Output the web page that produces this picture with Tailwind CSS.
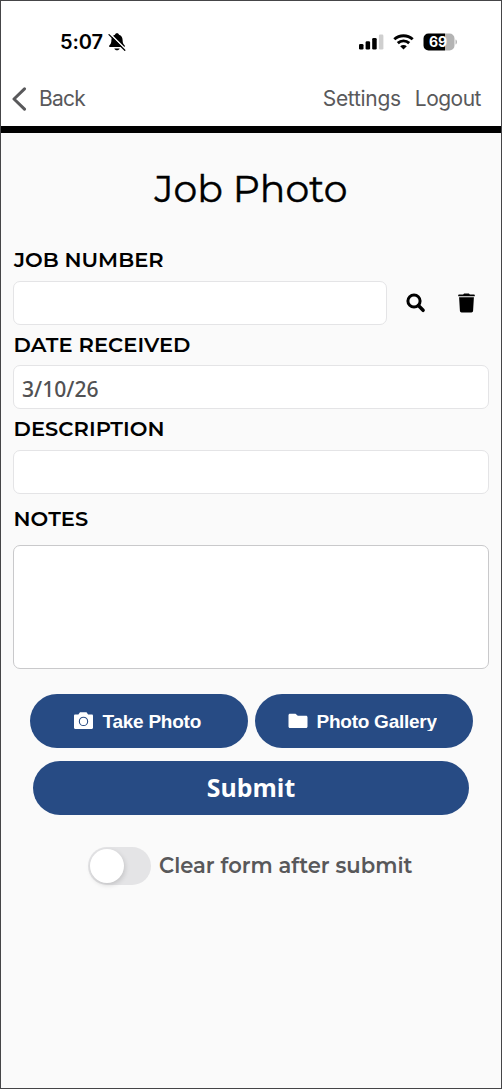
<!DOCTYPE html>
<html lang="en">
<head>
<meta charset="utf-8">
<title>Job Photo</title>
<script src="https://cdn.jsdelivr.net/npm/@tailwindcss/browser@4"></script>
</head>
<body class="bg-[#fafafa]">
<div class="flex h-[1089px] w-[502px] flex-col overflow-hidden border border-[#454547] bg-[#fafafa] font-[Montserrat,Inter,sans-serif] text-black">
  <header class="flex h-[132px] shrink-0 flex-col border-b-[7px] border-black bg-white font-[Inter,sans-serif]">
    <div class="flex h-[72px] items-start justify-between pt-[19px] pl-[59px] pr-[43px]">
      <div class="flex h-[44px] items-center gap-[5px]">
        <span class="text-[20px] leading-6 font-semibold tracking-[-0.1px]">5:07</span>
        <svg class="h-[20px] w-[18px]" viewBox="0 0 18 20"><path d="M9 1.200c1.200 0 1.900.7 2 1.600 2.500.8 3.500 2.700 3.600 5.200.1 3 .5 3.800 1.900 5.200.7.7.3 1.900-.6 1.900H2.100c-.9 0-1.300-1.200-.6-1.900C2.900 11.800 3.300 11 3.400 8 3.500 5.500 4.500 3.600 7 2.800c.1-.9.8-1.600 2-1.600zM6.300 16.400h5.400c-.4 1.200-1.400 1.800-2.700 1.800s-2.300-.6-2.700-1.800z"/><path d="M2 1.700 17.500 17.200" stroke="#fff" stroke-width="1.600"/><path d="M1 2.600 16.800 18.300" stroke="#000" stroke-width="1.300" stroke-linecap="round"/></svg>
      </div>
      <div class="flex h-[44px] items-center">
        <svg class="h-[16px] w-[25px]" viewBox="0 0 25 16"><rect x="0" y="10" width="4.500" height="5.500" rx="1.300"/><rect x="6.600" y="7.300" width="4.500" height="8.200" rx="1.300"/><rect x="13.200" y="4" width="4.500" height="11.500" rx="1.300"/><rect x="19.900" y="0.500" width="4.500" height="15" rx="1.300" fill="#cfcfcf"/></svg>
        <svg class="ml-[9px] h-[16px] w-[21px]" viewBox="0 0 21 16"><path d="M1.300 5.300c5.200-4.800 13.200-4.800 18.400 0M4.800 9.100c3.200-3 8.200-3 11.400 0" fill="none" stroke="#000" stroke-width="2.900"/><path d="M7.200 12.200c1.900-1.700 4.700-1.700 6.600 0l-3.300 3.300z"/></svg>
        <svg class="ml-[9px] h-[18px] w-[35px]" viewBox="0 0 35 18"><path d="M5.500.5H22v17H5.500A5 5 0 0 1 .5 12.500v-7a5 5 0 0 1 5-5z"/><path d="M22 .5h4.500a5 5 0 0 1 5 5v7a5 5 0 0 1-5 5H22zM32.500 6.500c2 .6 2 4.400 0 5z" fill="#b3b3b3"/><text x="15" y="14" text-anchor="middle" font-family="Inter" font-weight="700" font-size="14" fill="#fff">69</text></svg>
      </div>
    </div>
    <nav class="flex h-[52px] items-center pl-[11px] pr-[20px] text-[21px] text-[#59595b]">
      <svg class="h-[24px] w-[15px]" viewBox="0 0 15 24" fill="none" stroke="#59595b" stroke-width="3" stroke-linecap="round" stroke-linejoin="round"><path d="M12.500 1.800 2 12l10.500 10.200"/></svg>
      <span class="ml-[12px] tracking-[-0.75px]">Back</span>
      <span class="ml-auto tracking-[-0.3px]">Settings</span>
      <span class="ml-[14px] tracking-[-0.500px]">Logout</span>
    </nav>
  </header>
  <main class="flex flex-col px-[12px]">
    <h1 class="mt-[31px] h-[48px] text-center text-[37.800px] leading-[48px] font-normal [-webkit-text-stroke:0.4px_#000]">Job Photo</h1>
    <div class="mt-[36px] flex h-[24px] items-center pl-[1px] text-[21px] font-semibold"><span>JOB NUMBER</span></div>
    <div class="mt-[9px] flex h-[44px] items-center">
      <div class="h-[44px] w-[374px] rounded-[7px] border border-[#e4e4e6] bg-white"></div>
      <svg class="ml-[18px] h-[20px] w-[21px]" viewBox="0 0 21 20" fill="none" stroke="#000"><circle cx="9" cy="8" r="6.100" stroke-width="3"/><path d="m13.400 12.600 4.700 4.700" stroke-width="3.500" stroke-linecap="round"/></svg>
      <svg class="ml-[32px] h-[20px] w-[18px]" viewBox="0 0 18 20"><path d="M.200 2.200C.200 1.600.5 1.400 1 1.400H5.100L6.100.5h4.800l1 .9h4.100c.5 0 .8.2.8.8v1H.200zM1.100 4.300h14.800L15.100 17.800c-.1 1-.8 1.600-1.700 1.600H3.600c-.9 0-1.600-.6-1.700-1.600z"/></svg>
    </div>
    <div class="mt-[8px] flex h-[24px] items-center pl-[0.500px] text-[21px] font-semibold tracking-[0.080px]"><span>DATE RECEIVED</span></div>
    <div class="mt-[8px] flex h-[44px] items-center rounded-[7px] border border-[#e4e4e6] bg-white pt-[3px] pl-[8px] font-['Noto_Sans',sans-serif] text-[21.100px] font-medium text-[#515153]">3/10/26</div>
    <div class="mt-[8px] flex h-[24px] items-center pl-[0.500px] text-[21px] font-semibold tracking-[0.080px]"><span>DESCRIPTION</span></div>
    <div class="mt-[9px] h-[44px] rounded-[7px] border border-[#e4e4e6] bg-white"></div>
    <div class="mt-[13px] flex h-[24px] items-center pl-[0.500px] text-[21px] font-semibold tracking-[0.080px]"><span>NOTES</span></div>
    <div class="mt-[14px] h-[124px] rounded-[7px] border border-[#c9c9cb] bg-white"></div>
    <div class="mt-[25px] flex justify-center gap-[7px] font-['Liberation_Sans',sans-serif] text-[19px] font-bold tracking-[-0.250px] text-white">
      <div class="flex h-[54px] w-[218px] items-center rounded-[27px] bg-[#274b84] pl-[43px]">
        <svg class="h-[18px] w-[21px]" viewBox="0 0 21 18"><path fill="#fff" fill-rule="evenodd" d="M7 .2h6.500l1.600 2.300h3.700c.7 0 1.200.5 1.200 1.200v12c0 .7-.5 1.200-1.200 1.200H2.200c-.7 0-1.200-.5-1.200-1.200v-12c0-.7.5-1.200 1.200-1.200h3.200zM10.500 4.700a4.700 4.700 0 1 0 0 9.400 4.700 4.700 0 0 0 0-9.400zm0 1.100a3.600 3.600 0 1 1 0 7.200 3.600 3.600 0 0 1 0-7.200z"/></svg>
        <span class="ml-[9px] pt-[2px]">Take Photo</span>
      </div>
      <div class="flex h-[54px] w-[218px] items-center rounded-[27px] bg-[#274b84] pl-[33px]">
        <svg class="h-[16px] w-[20px]" viewBox="0 0 20 16"><path fill="#fff" d="M2 .8h5.500l2.300 2H18c.9 0 1.500.6 1.500 1.500v9.200c0 .9-.6 1.500-1.500 1.500H2c-.9 0-1.500-.6-1.500-1.500V2.300C.500 1.400 1.100.8 2 .8z"/></svg>
        <!-- Tight line box trims the descender of the y -->
        <span class="ml-[9px] mt-[1px] h-[19px] overflow-hidden leading-[19px]">Photo Gallery</span>
      </div>
    </div>
    <div class="ml-[20px] mt-[13px] flex h-[54px] w-[436px] items-center justify-center rounded-[27px] bg-[#274b84] font-['Open_Sans',sans-serif] text-[24.800px] font-bold text-white">Submit</div>
    <div class="ml-[75px] mt-[32px] flex h-[38px] items-center">
      <div class="flex h-[38px] w-[63px] items-center rounded-full bg-[#e4e4e6] pl-[2px]"><div class="h-[34px] w-[34px] rounded-full bg-white shadow-[1px_2px_5px_rgba(0,0,0,0.15)]"></div></div>
      <span class="ml-[8px] text-[21.100px] font-semibold whitespace-nowrap text-[#58585a]">Clear form after submit</span>
    </div>
  </main>
</div>
</body>
</html>
